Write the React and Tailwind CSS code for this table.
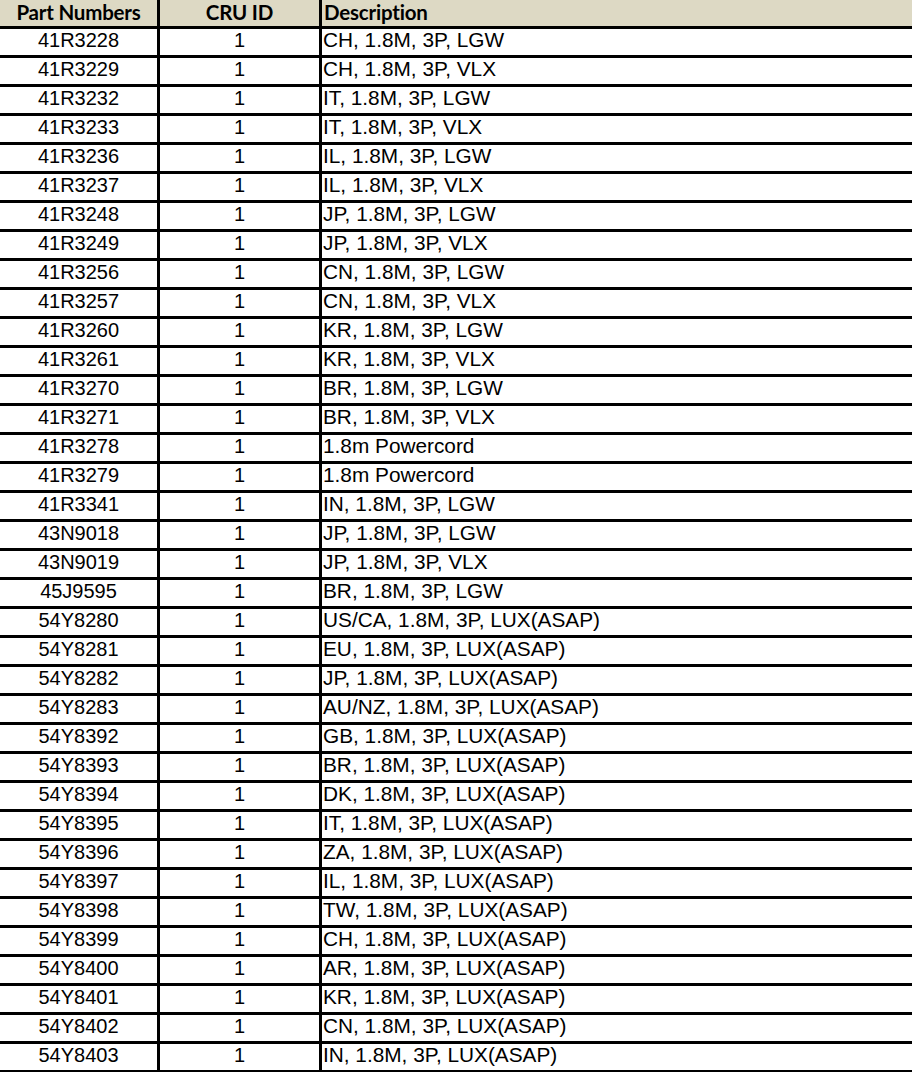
import React from "react";

const rows = [
  ["41R3228", "CH, 1.8M, 3P, LGW"],
  ["41R3229", "CH, 1.8M, 3P, VLX"],
  ["41R3232", "IT, 1.8M, 3P, LGW"],
  ["41R3233", "IT, 1.8M, 3P, VLX"],
  ["41R3236", "IL, 1.8M, 3P, LGW"],
  ["41R3237", "IL, 1.8M, 3P, VLX"],
  ["41R3248", "JP, 1.8M, 3P, LGW"],
  ["41R3249", "JP, 1.8M, 3P, VLX"],
  ["41R3256", "CN, 1.8M, 3P, LGW"],
  ["41R3257", "CN, 1.8M, 3P, VLX"],
  ["41R3260", "KR, 1.8M, 3P, LGW"],
  ["41R3261", "KR, 1.8M, 3P, VLX"],
  ["41R3270", "BR, 1.8M, 3P, LGW"],
  ["41R3271", "BR, 1.8M, 3P, VLX"],
  ["41R3278", "1.8m Powercord"],
  ["41R3279", "1.8m Powercord"],
  ["41R3341", "IN, 1.8M, 3P, LGW"],
  ["43N9018", "JP, 1.8M, 3P, LGW"],
  ["43N9019", "JP, 1.8M, 3P, VLX"],
  ["45J9595", "BR, 1.8M, 3P, LGW"],
  ["54Y8280", "US/CA, 1.8M, 3P, LUX(ASAP)"],
  ["54Y8281", "EU, 1.8M, 3P, LUX(ASAP)"],
  ["54Y8282", "JP, 1.8M, 3P, LUX(ASAP)"],
  ["54Y8283", "AU/NZ, 1.8M, 3P, LUX(ASAP)"],
  ["54Y8392", "GB, 1.8M, 3P, LUX(ASAP)"],
  ["54Y8393", "BR, 1.8M, 3P, LUX(ASAP)"],
  ["54Y8394", "DK, 1.8M, 3P, LUX(ASAP)"],
  ["54Y8395", "IT, 1.8M, 3P, LUX(ASAP)"],
  ["54Y8396", "ZA, 1.8M, 3P, LUX(ASAP)"],
  ["54Y8397", "IL, 1.8M, 3P, LUX(ASAP)"],
  ["54Y8398", "TW, 1.8M, 3P, LUX(ASAP)"],
  ["54Y8399", "CH, 1.8M, 3P, LUX(ASAP)"],
  ["54Y8400", "AR, 1.8M, 3P, LUX(ASAP)"],
  ["54Y8401", "KR, 1.8M, 3P, LUX(ASAP)"],
  ["54Y8402", "CN, 1.8M, 3P, LUX(ASAP)"],
  ["54Y8403", "IN, 1.8M, 3P, LUX(ASAP)"],
];

export default function App() {
  return (
    <div className="w-[912px] h-[1072px] overflow-hidden bg-white text-black font-[family-name:Liberation_Sans,Arial,sans-serif]">
      <div className="flex h-[29px] border-b-[3px] border-black bg-[#ddd9c4] font-[family-name:Lato,sans-serif] font-bold text-[20.5px] leading-[24px] tracking-[-0.2px]">
        <div className="w-[160px] shrink-0 border-r-[3px] border-black text-center">Part Numbers</div>
        <div className="w-[162px] shrink-0 border-r-[3px] border-black text-center">CRU ID</div>
        <div className="flex-1 pl-[2px]">Description</div>
      </div>
      {rows.map(([pn, desc]) => (
        <div
          key={pn}
          className="flex h-[29px] border-b-[3px] border-black text-[20px] leading-[22px]"
        >
          <div className="w-[160px] shrink-0 border-r-[3px] border-black text-center">{pn}</div>
          <div className="w-[162px] shrink-0 border-r-[3px] border-black text-center">1</div>
          <div className="flex-1 pl-[1px] whitespace-nowrap text-[20.8px]">{desc}</div>
        </div>
      ))}
    </div>
  );
}
